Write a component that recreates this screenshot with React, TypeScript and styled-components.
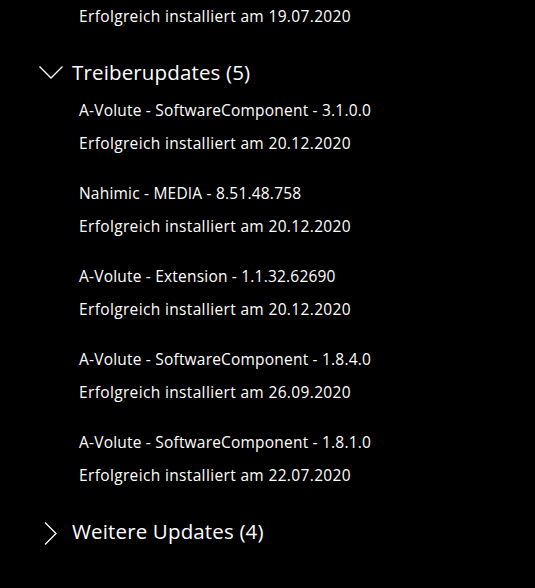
import React from 'react'
import styled, {createGlobalStyle} from 'styled-components'

const GlobalStyle = createGlobalStyle`
  html, body {
    margin: 0;
    padding: 0;
    background: #000;
  }
  body {
    font-family: "Open Sans", "Noto Sans", "Liberation Sans", sans-serif;
    color: #fff;
    overflow: hidden;
  }
`

type Update = {
  title: string
  date: string
}

const driverUpdates: Update[] = [
  {title: 'A-Volute - SoftwareComponent - 3.1.0.0', date: '20.12.2020'},
  {title: 'Nahimic - MEDIA - 8.51.48.758', date: '20.12.2020'},
  {title: 'A-Volute - Extension - 1.1.32.62690', date: '20.12.2020'},
  {title: 'A-Volute - SoftwareComponent - 1.8.4.0', date: '26.09.2020'},
  {title: 'A-Volute - SoftwareComponent - 1.8.1.0', date: '22.07.2020'},
]

const Page = styled.div`
  width: 535px;
  height: 588px;
  background: #000;
  display: flex;
  flex-direction: column;
  padding-left: 39px;
  box-sizing: border-box;
`

const Line = styled.div`
  font-size: 15.5px;
  letter-spacing: 0.35px;
  line-height: 33px;
  padding-left: 40px;
  white-space: nowrap;
`

const Title = styled(Line)`
  letter-spacing: 0.2px;
`

const Group = styled.section<{$top: number}>`
  margin-top: ${p => p.$top}px;
  display: flex;
  flex-direction: column;
`

const GroupHeader = styled.div`
  display: flex;
  align-items: center;
  gap: 9px;
  height: 40px;
  font-size: 20.5px;
  letter-spacing: 0.15px;
  white-space: nowrap;
`

const Chevron = styled.svg<{$shift?: number}>`
  width: 24px;
  height: 24px;
  flex: none;
  margin-top: ${p => p.$shift ?? 0}px;
`

const ItemList = styled.div`
  display: flex;
  flex-direction: column;
  gap: 17px;
  padding-top: 2px;
`

const Item = styled.div`
  display: flex;
  flex-direction: column;
`

const ChevronDown = () => (
  <Chevron viewBox="0 0 24 24" fill="none" stroke="#fff" strokeWidth={1.3}>
    <path d="M0.5 6.5 L12 18 L23.5 6.5" />
  </Chevron>
)

const ChevronRight = () => (
  <Chevron viewBox="0 0 24 24" fill="none" stroke="#fff" strokeWidth={1.3} $shift={4}>
    <path d="M6 1.5 L17 12.5 L6 23.5" />
  </Chevron>
)

export default function App() {
  return (
    <>
      <GlobalStyle />
      <Page>
        <Line>Erfolgreich installiert am 19.07.2020</Line>
        <Group $top={19}>
          <GroupHeader>
            <ChevronDown />
            <span>Treiberupdates ({driverUpdates.length})</span>
          </GroupHeader>
          <ItemList>
            {driverUpdates.map((u, i) => (
              <Item key={i}>
                <Title>{u.title}</Title>
                <Line>Erfolgreich installiert am {u.date}</Line>
              </Item>
            ))}
          </ItemList>
        </Group>
        <Group $top={19}>
          <GroupHeader>
            <ChevronRight />
            <span>Weitere Updates (4)</span>
          </GroupHeader>
        </Group>
      </Page>
    </>
  )
}
